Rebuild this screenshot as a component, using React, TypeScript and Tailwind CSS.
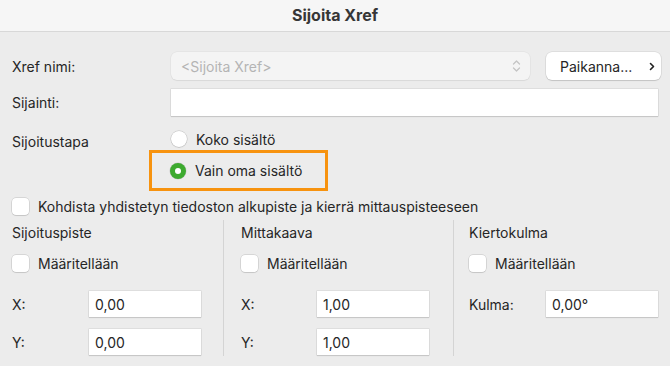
import React from "react";

// ─── Small controls ──────────────────────────────────────────────────────────

function Checkbox() {
  return (
    <span className="inline-block h-[17px] w-[17px] shrink-0 rounded-[4px] bg-white shadow-[0_0_0_0.5px_rgba(0,0,0,0.18),0_1px_1px_rgba(0,0,0,0.08)]" />
  );
}

function Radio({ checked }: { checked?: boolean }) {
  if (checked) {
    return (
      <span className="flex h-[16px] w-[16px] shrink-0 items-center justify-center rounded-full bg-[#3daa2f] shadow-[0_0_0_0.5px_rgba(0,0,0,0.15)]">
        <span className="h-[6px] w-[6px] rounded-full bg-white" />
      </span>
    );
  }
  return (
    <span className="inline-block h-[16px] w-[16px] shrink-0 rounded-full bg-white shadow-[0_0_0_0.5px_rgba(0,0,0,0.2),0_1px_1px_rgba(0,0,0,0.08)]" />
  );
}

function TextBox({ value, className }: { value?: string; className: string }) {
  return (
    <div
      className={`flex h-[26px] items-center bg-white px-[6px] text-[#262626] shadow-[0_0_0_0.5px_rgba(0,0,0,0.12),0_1px_1px_rgba(0,0,0,0.1)] ${className}`}
    >
      {value}
    </div>
  );
}

function Field({ label, value, labelW }: { label: string; value: string; labelW: string }) {
  return (
    <div className="flex h-[26px] items-center">
      <span className={`shrink-0 ${labelW}`}>{label}</span>
      <TextBox value={value} className="w-[112px]" />
    </div>
  );
}

function Section({
  title,
  children,
  className,
}: {
  title: string;
  children: React.ReactNode;
  className: string;
}) {
  return (
    <div className={`flex flex-col ${className}`}>
      <div className="mt-[5px] h-[16px] leading-[16px]">{title}</div>
      <div className="mt-[13px] flex h-[18px] items-center gap-[9px]">
        <Checkbox />
        <span>Määritellään</span>
      </div>
      <div className="mt-[19px] flex flex-col gap-[12px]">{children}</div>
    </div>
  );
}

// ─── Dialog ──────────────────────────────────────────────────────────────────

export default function App() {
  return (
    <div
      className="h-[366px] w-[670px] overflow-hidden bg-[#ececec] text-[14px] text-[#262626]"
      style={{ fontFamily: "Inter, 'Liberation Sans', sans-serif" }}
    >
      {/* Title bar */}
      <div className="flex h-[32px] items-center justify-center border-b border-[#d8d8d8] bg-[#f6f6f6] pb-[2px] text-[16px] font-bold text-[#363636]">
        Sijoita Xref
      </div>

      <div className="pl-[12px] pr-[9px] pt-[20px]">
        {/* Xref nimi */}
        <div className="flex h-[28px] items-center">
          <span className="w-[159px] shrink-0">Xref nimi:</span>
          <div className="flex h-[28px] w-[359px] items-center justify-between rounded-[6px] bg-[#f4f4f4] pl-[10px] pr-[9px] text-[#b4b4b4] shadow-[0_0_0_0.5px_rgba(0,0,0,0.06),0_1px_1px_rgba(0,0,0,0.05)]">
            <span>&lt;Sijoita Xref&gt;</span>
            <svg width="9" height="14" viewBox="0 0 9 14" fill="none" stroke="#c4c4c4" strokeWidth="1.3" strokeLinecap="round" strokeLinejoin="round">
              <path d="M1.5 5 L4.5 2 L7.5 5" />
              <path d="M1.5 9 L4.5 12 L7.5 9" />
            </svg>
          </div>
          <div className="ml-[16px] flex h-[28px] w-[115px] items-center justify-between rounded-[6px] bg-white pl-[14px] pr-[6px] shadow-[0_0_0_0.5px_rgba(0,0,0,0.12),0_1px_1px_rgba(0,0,0,0.12)]">
            <span>Paikanna...</span>
            <svg width="6" height="9" viewBox="0 0 6 9" fill="none" stroke="#222" strokeWidth="1.6" strokeLinecap="round" strokeLinejoin="round">
              <path d="M1.5 1.5 L4.5 4.5 L1.5 7.5" />
            </svg>
          </div>
        </div>

        {/* Sijainti */}
        <div className="mt-[9px] flex h-[27px] items-center">
          <span className="w-[159px] shrink-0">Sijainti:</span>
          <TextBox className="h-[27px] w-[487px]" />
        </div>

        {/* Sijoitustapa */}
        <div className="mt-[14px] flex">
          <span className="w-[137px] shrink-0 pt-[1px]">Sijoitustapa</span>
          <div className="flex flex-col">
            <div className="flex h-[18px] items-center gap-[9px] pl-[22px]">
              <Radio />
              <span>Koko sisältö</span>
            </div>
            <div className="mt-[2px] flex h-[41px] w-[179px] items-center gap-[9px] border-[3px] border-[#f7930f] pl-[18px]">
              <Radio checked />
              <span>Vain oma sisältö</span>
            </div>
          </div>
        </div>

        {/* Kohdista */}
        <div className="mt-[6px] flex h-[18px] items-center gap-[9px]">
          <Checkbox />
          <span>Kohdista yhdistetyn tiedoston alkupiste ja kierrä mittauspisteeseen</span>
        </div>

        {/* Three sections */}
        <div className="mt-[5px] flex h-[136px]">
          <Section title="Sijoituspiste" className="w-[211px]">
            <Field label="X:" value="0,00" labelW="w-[77px]" />
            <Field label="Y:" value="0,00" labelW="w-[77px]" />
          </Section>
          <div className="w-px bg-[#d4d4d4]" />
          <Section title="Mittakaava" className="w-[229px] pl-[17px]">
            <Field label="X:" value="1,00" labelW="w-[76px]" />
            <Field label="Y:" value="1,00" labelW="w-[76px]" />
          </Section>
          <div className="w-px bg-[#d4d4d4]" />
          <Section title="Kiertokulma" className="pl-[15px]">
            <Field label="Kulma:" value="0,00°" labelW="w-[77px]" />
          </Section>
        </div>
      </div>
    </div>
  );
}
